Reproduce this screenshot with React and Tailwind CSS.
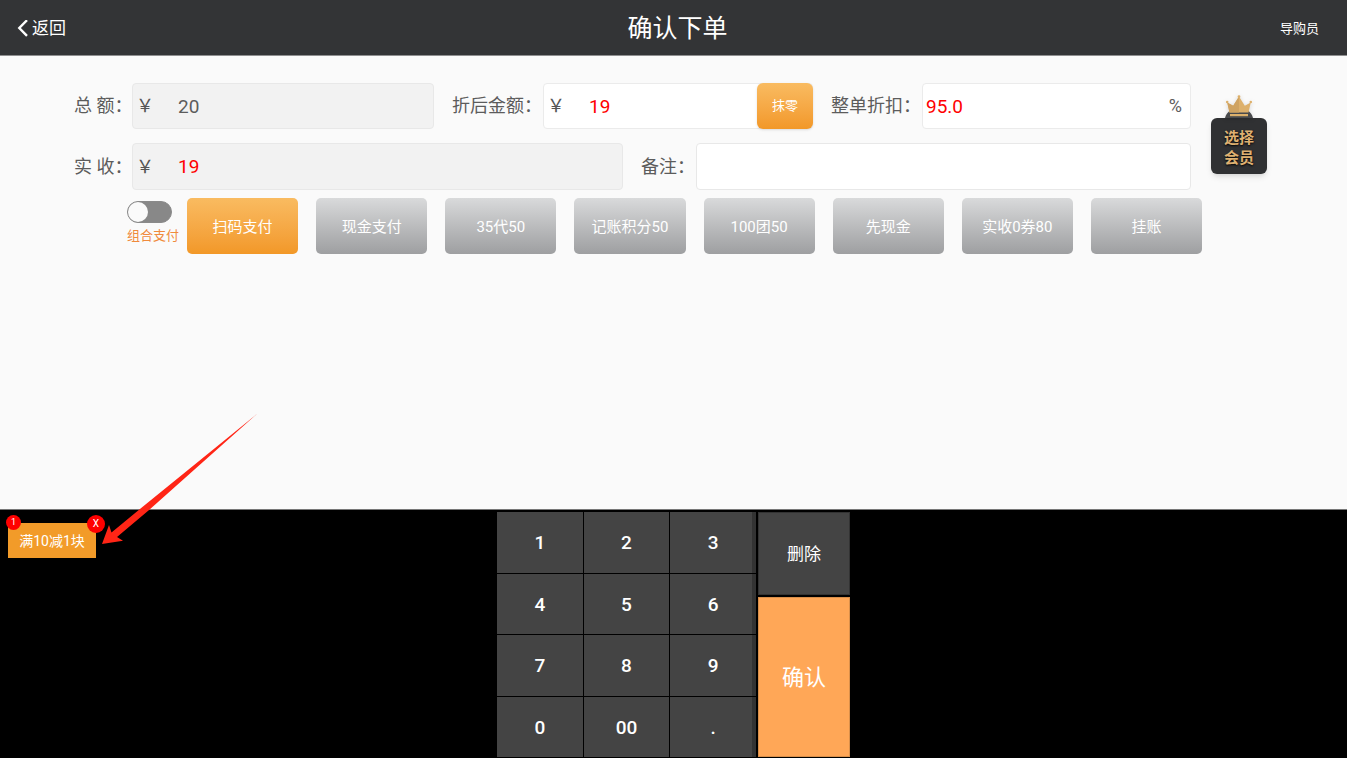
import { useState } from 'react';

const PAY_METHODS = ['扫码支付', '现金支付', '35代50', '记账积分50', '100团50', '先现金', '实收0券80', '挂账'];
const KEYS = ['1', '2', '3', '4', '5', '6', '7', '8', '9', '0', '00', '.'];

const FieldLabel = ({ htmlFor, className = '', children }) => (
    <label htmlFor={htmlFor} className={`whitespace-nowrap text-lg text-[#5c5c5c] ${className}`}>
        {children}
    </label>
);

const MoneyInput = ({ id, value, onChange, readOnly, red, children }) => (
    <div className={`flex h-full min-w-0 items-center rounded-sm border ${readOnly ? 'border-[#e8e8e8] bg-[#f2f2f2]' : 'border-[#ebebeb] bg-white'}`}>
        <span className="w-[45px] shrink-0 pl-[3px] text-lg text-[#555]">￥</span>
        <input
            id={id}
            value={value}
            onChange={onChange}
            readOnly={readOnly}
            className={`h-full w-full min-w-0 flex-1 bg-transparent text-[19px] outline-none ${red ? 'text-[#f00]' : 'text-[#5c5c5c]'}`}
        />
        {children}
    </div>
);

const TopBar = () => (
    <header className="grid h-14 grid-cols-[1fr_auto_1fr] items-center border-b border-[#8f8f90] bg-[#333436] pt-[2px] text-white">
        <button type="button" className="flex items-center justify-self-start pl-4 text-[17px]">
            <svg width="16" height="18" viewBox="0 0 16 18" fill="none" stroke="currentColor" strokeWidth="2.4" aria-hidden="true">
                <path d="M11 .2 3.3 8l7.7 7.8" />
            </svg>
            返回
        </button>
        <h1 className="pl-2 text-[25px]">确认下单</h1>
        <button type="button" className="justify-self-end pr-7 text-[13px]">导购员</button>
    </header>
);

const MemberButton = () => (
    <button type="button" className="mt-3 flex w-14 shrink-0 flex-col items-center self-start">
        <svg width="32" height="23" viewBox="0 0 32 23" className="drop-shadow-sm" aria-hidden="true">
            <path d="M2 23c1-4 3-6 6-8h16c3 2 5 4 6 8z" fill="#4a4b4d" />
            <path d="M6.5 17.5 4.2 7.6l6 3.2L16 1.5l5.8 9.3 6-3.2-2.3 9.9z" fill="#ddb06b" />
            <path d="M6.5 17.5 4.2 7.6l6 3.2L16 1.5v16z" fill="#cfa362" />
            <path d="M7 19h18v2.2H7z" fill="#ddb06b" />
            <circle cx="4.2" cy="7" r="1.3" fill="#ddb06b" />
            <circle cx="16" cy="1.7" r="1.4" fill="#ddb06b" />
            <circle cx="27.8" cy="7" r="1.3" fill="#ddb06b" />
        </svg>
        <span className="flex h-14 w-full items-center justify-center rounded-md bg-[#303133] pt-[3px] text-[15px] leading-5 font-bold text-[#deb071] shadow-md text-shadow-[0_1px_2px_#000]">
            选择
            <br />
            会员
        </span>
    </button>
);

const OrderForm = () => {
    const [amount, setAmount] = useState('19');
    const [discount, setDiscount] = useState('95.0');
    const [remark, setRemark] = useState('');

    return (
        <div className="flex gap-5">
            <div className="flex min-w-0 flex-1 flex-col gap-[14px]">
                <div className="grid h-[46px] grid-cols-[58px_302fr_109px_270fr_109px_269fr] grid-rows-[46px] items-center">
                    <FieldLabel htmlFor="total">总 额：</FieldLabel>
                    <MoneyInput id="total" value="20" readOnly />
                    <FieldLabel htmlFor="amount" className="pl-[18px]">折后金额：</FieldLabel>
                    <MoneyInput id="amount" value={amount} onChange={(e) => setAmount(e.target.value)} red>
                        <button
                            type="button"
                            onClick={() => setAmount(String(Math.floor(Number(amount) || 0)))}
                            className="-my-px -mr-px h-[46px] w-14 shrink-0 rounded-md bg-linear-to-b from-[#f9bb60] to-[#f29827] text-[13px] text-white shadow-sm"
                        >
                            抹零
                        </button>
                    </MoneyInput>
                    <FieldLabel htmlFor="discount" className="pl-[18px]">整单折扣：</FieldLabel>
                    <div className="flex h-full min-w-0 items-center rounded-sm border border-[#ebebeb] bg-white pr-2 pl-[3px]">
                        <input
                            id="discount"
                            value={discount}
                            onChange={(e) => setDiscount(e.target.value)}
                            className="h-full w-full min-w-0 flex-1 bg-transparent text-[19px] text-[#f00] outline-none"
                        />
                        <span className="text-lg text-[#5c5c5c]">%</span>
                    </div>
                </div>
                <div className="grid h-[47px] grid-cols-[58px_491fr_73px_495fr] grid-rows-[47px] items-center">
                    <FieldLabel htmlFor="received">实 收：</FieldLabel>
                    <MoneyInput id="received" value={amount} readOnly red />
                    <FieldLabel htmlFor="remark" className="pl-[18px]">备注：</FieldLabel>
                    <input
                        id="remark"
                        value={remark}
                        onChange={(e) => setRemark(e.target.value)}
                        className="h-full min-w-0 rounded-sm border border-[#e8e8e8] bg-white px-1 text-lg text-[#555] outline-none"
                    />
                </div>
            </div>
            <MemberButton />
        </div>
    );
};

const PayMethods = () => {
    const [active, setActive] = useState(PAY_METHODS[0]);

    return (
        <div className="mt-2 flex gap-2 pr-[65px] pl-[53px]">
            <label className="flex w-[52px] shrink-0 flex-col pt-[3px] text-[13px] leading-5 whitespace-nowrap text-[#f08a3c]">
                <input
                    type="checkbox"
                    className="mb-[3px] h-[22px] w-[45px] appearance-none rounded-full border border-[#8a8a8a] bg-[#888] before:block before:size-5 before:rounded-full before:bg-[#fafafa] checked:bg-[#f29827] checked:before:ml-[23px]"
                />
                组合支付
            </label>
            <div className="grid flex-1 grid-cols-8 gap-[18px]">
                {PAY_METHODS.map((name) => (
                    <button
                        key={name}
                        type="button"
                        onClick={() => setActive(name)}
                        className={`h-14 rounded-[5px] bg-linear-to-b pt-[2px] text-[15px] text-white ${
                            name === active ? 'from-[#f9bb60] to-[#f29827]' : 'from-[#d9dadb] to-[#9e9fa1]'
                        }`}
                    >
                        {name}
                    </button>
                ))}
            </div>
        </div>
    );
};

const PromoTag = () => (
    <div className="relative mt-[13px] ml-2 h-[35px] w-[88px] bg-[#f29b29] text-center text-[14px] leading-9 text-white">
        满10减1块
        <span className="absolute -top-2 -left-[2px] size-[15px] rounded-full bg-[#f00] text-[9px] leading-[15px]">1</span>
        <button type="button" aria-label="移除优惠" className="absolute -top-2 left-[79px] size-[18px] rounded-full bg-[#f00] text-[10px] leading-[18px]">
            X
        </button>
        <svg className="pointer-events-none absolute -top-[110px] left-[94px]" width="156" height="132" viewBox="0 0 156 132" aria-hidden="true">
            <path d="M0 131 7 112l2.5 7.5L41 93.5 155.5 0.5 46.5 97.5 15 124l6 3.7z" fill="#ff2516" />
        </svg>
    </div>
);

const Keypad = () => (
    <div className="flex gap-[2px] pt-[2px] pb-px">
        <div className="grid w-[259px] grid-cols-3 grid-rows-4 gap-px">
            {KEYS.map((key) => (
                <button
                    key={key}
                    type="button"
                    className="border-[#333] bg-[#444] pt-[2px] text-[19px] font-medium text-white nth-[3n]:border-r-4 nth-[3n]:pl-1"
                >
                    {key}
                </button>
            ))}
        </div>
        <div className="flex w-[92px] flex-col gap-[2px]">
            <button type="button" className="h-[83px] border border-[#333] bg-[#444] pt-[2px] text-[17px] text-white">删除</button>
            <button type="button" className="flex-1 border border-[#d98f4a] bg-[#ffa757] text-[22px] text-white">确认</button>
        </div>
    </div>
);

const App = () => (
    <div className="flex min-h-screen flex-col bg-[#fafafa] font-[Roboto,'Noto_Sans_CJK_SC',sans-serif]">
        <TopBar />
        <main className="flex-1 pt-[27px] pr-20 pl-[74px]">
            <OrderForm />
            <PayMethods />
        </main>
        <footer className="grid h-[249px] grid-cols-[1fr_353px_1fr] border-t border-[#777] bg-black">
            <PromoTag />
            <Keypad />
        </footer>
    </div>
);

export default App;
